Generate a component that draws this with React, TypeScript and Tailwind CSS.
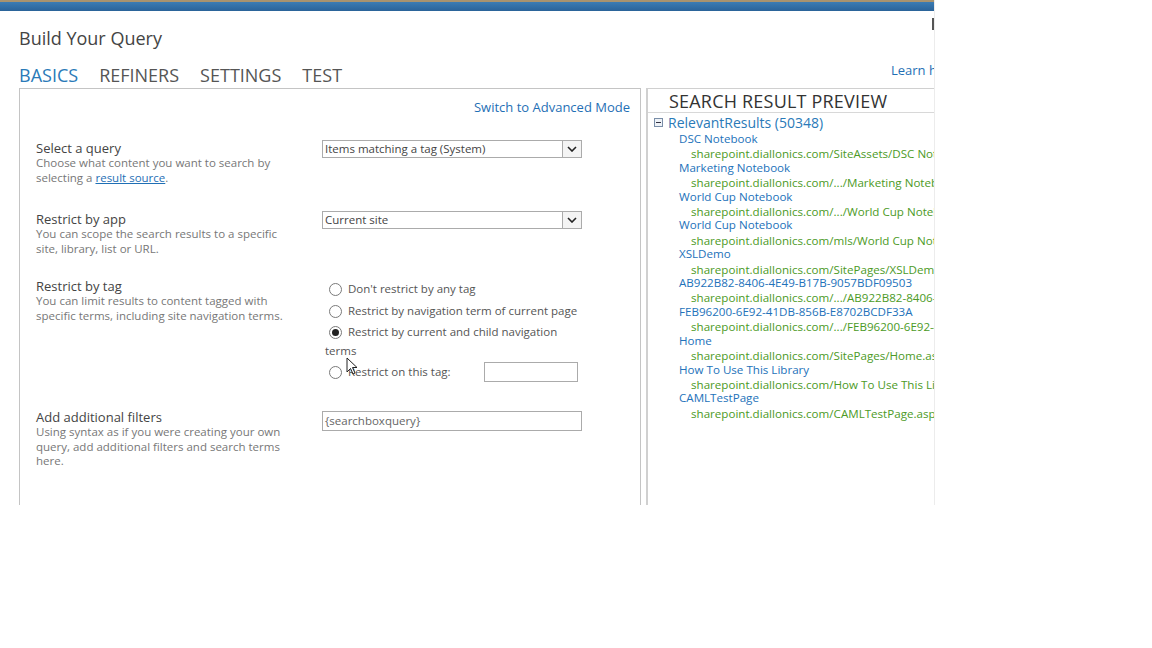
import React from "react";

const font = { fontFamily: '"Open Sans", "Noto Sans", sans-serif' };

function Radio({ checked }: { checked?: boolean }) {
  return (
    <span className="inline-flex w-[13px] h-[13px] rounded-full border border-[#7a7a7a] bg-white items-center justify-center shrink-0">
      {checked && <span className="w-[7px] h-[7px] rounded-full bg-[#222]" />}
    </span>
  );
}

function Select({ value }: { value: string }) {
  return (
    <div className="w-[260px] h-[18px] mt-[1px] border border-[#ababab] bg-white flex items-center">
      <span className="flex-1 pl-[2px] text-[11.5px] text-[#444] leading-none">{value}</span>
      <span className="w-[19px] h-[16px] border-l border-[#ababab] bg-[#f4f4f4] flex items-center justify-center">
        <svg width="10" height="6" viewBox="0 0 10 6">
          <path d="M1 1 L5 5 L9 1" stroke="#222" strokeWidth="1.6" fill="none" />
        </svg>
      </span>
    </div>
  );
}

const results: [string, string][] = [
  ["DSC Notebook", "sharepoint.diallonics.com/SiteAssets/DSC Notebook"],
  ["Marketing Notebook", "sharepoint.diallonics.com/.../Marketing Notebook"],
  ["World Cup Notebook", "sharepoint.diallonics.com/.../World Cup Notebook"],
  ["World Cup Notebook", "sharepoint.diallonics.com/mls/World Cup Notebook"],
  ["XSLDemo", "sharepoint.diallonics.com/SitePages/XSLDemo.aspx"],
  ["AB922B82-8406-4E49-B17B-9057BDF09503", "sharepoint.diallonics.com/.../AB922B82-8406-4E49"],
  ["FEB96200-6E92-41DB-856B-E8702BCDF33A", "sharepoint.diallonics.com/.../FEB96200-6E92-41DB"],
  ["Home", "sharepoint.diallonics.com/SitePages/Home.aspx"],
  ["How To Use This Library", "sharepoint.diallonics.com/How To Use This Library"],
  ["CAMLTestPage", "sharepoint.diallonics.com/CAMLTestPage.aspx"],
];

export default function App() {
  return (
    <div className="w-[1152px] h-[648px] bg-white" style={font}>
      <div className="w-[935px] h-[505px] overflow-hidden relative border-r border-[#ececec] bg-white">
        <div className="h-[2px] bg-[#a8936f]" />
        <div className="h-[9px] bg-gradient-to-b from-[#3b7cb4] to-[#2a6399]" />
        <div className="absolute right-0 top-[18px] w-[2px] h-[12px] bg-[#555]" />
        <div className="pl-[19px] pt-[16px] h-[40px] text-[18px] leading-[22px] text-[#444]">Build Your Query</div>
        <div className="flex items-start h-[37px] pl-[19px]">
          <div className="flex gap-[21px] pt-[13px] text-[18px] leading-[22px]">
            <span className="text-[#2a7ab8]">BASICS</span>
            <span className="text-[#555]">REFINERS</span>
            <span className="text-[#555]">SETTINGS</span>
            <span className="text-[#555]">TEST</span>
          </div>
          <div className="flex-1" />
          <div className="w-[43px] pt-[10px] text-[13px] leading-[18px] text-[#1f6fb5] whitespace-nowrap overflow-hidden">
            Learn how to build a query
          </div>
        </div>
        <div className="flex gap-[6px] ml-[19px]">
          {/* Left panel */}
          <div className="w-[622px] h-[420px] border border-[#c4c4c4] border-b-0 shrink-0 relative">
            <div className="flex justify-end pr-[10px] pt-[9px] h-[50px] text-[13px] leading-[18px] text-[#1f6fb5]">
              Switch to Advanced Mode
            </div>
            {/* row 1 */}
            <div className="flex h-[71px] pl-[16px]">
              <div className="w-[286px] pt-[1px]">
                <div className="text-[13px] leading-[16px] text-[#444]">Select a query</div>
                <div className="text-[11.5px] leading-[14.5px] text-[#777]">
                  Choose what content you want to search by<br />selecting a{" "}
                  <span className="text-[#1f6fb5] underline">result source</span>.
                </div>
              </div>
              <Select value="Items matching a tag (System)" />
            </div>
            {/* row 2 */}
            <div className="flex h-[67px] pl-[16px]">
              <div className="w-[286px] pt-[1px]">
                <div className="text-[13px] leading-[16px] text-[#444]">Restrict by app</div>
                <div className="text-[11.5px] leading-[14.5px] text-[#777]">
                  You can scope the search results to a specific<br />site, library, list or URL.
                </div>
              </div>
              <Select value="Current site" />
            </div>
            {/* row 3 */}
            <div className="flex h-[132px] pl-[16px]">
              <div className="w-[286px] pt-[1px]">
                <div className="text-[13px] leading-[16px] text-[#444]">Restrict by tag</div>
                <div className="text-[11.5px] leading-[14.5px] text-[#777]">
                  You can limit results to content tagged with<br />specific terms, including site navigation terms.
                </div>
              </div>
              <div className="pt-[4px] text-[11.5px] text-[#555] leading-[16px]">
                <div className="flex items-center gap-[6px] pl-[7px] h-[16px]"><Radio /><span>Don't restrict by any tag</span></div>
                <div className="flex items-center gap-[6px] pl-[7px] h-[16px] mt-[6px]"><Radio /><span>Restrict by navigation term of current page</span></div>
                <div className="flex items-center gap-[6px] pl-[7px] h-[16px] mt-[5px]"><Radio checked /><span>Restrict by current and child navigation</span></div>
                <div className="pl-[3px] h-[16px] mt-[3px]">terms</div>
                <div className="flex items-center gap-[6px] pl-[7px] h-[20px] mt-[3px]">
                  <Radio />
                  <span className="w-[130px]">Restrict on this tag:</span>
                  <span className="w-[94px] h-[20px] border border-[#ababab] bg-white" />
                </div>
              </div>
            </div>
            {/* row 4 */}
            <div className="flex pl-[16px]">
              <div className="w-[286px]">
                <div className="text-[13px] leading-[16px] text-[#444]">Add additional filters</div>
                <div className="text-[11.5px] leading-[14.5px] text-[#777]">
                  Using syntax as if you were creating your own<br />query, add additional filters and search terms<br />here.
                </div>
              </div>
              <div className="w-[260px] h-[20px] mt-[2px] border border-[#ababab] bg-white flex items-center pl-[2px] text-[11.5px] text-[#666]">
                {"{searchboxquery}"}
              </div>
            </div>
            {/* cursor */}
            <svg className="absolute left-[326px] top-[268px]" width="12" height="18" viewBox="0 0 12 18">
              <path d="M1 1 L1 15 L4.5 11.5 L7 17 L9 16 L6.5 10.5 L11 10.5 Z" fill="#fff" stroke="#222" strokeWidth="1" />
            </svg>
          </div>
          {/* Right panel */}
          <div className="flex-1 h-[420px] border-l-2 border-t border-[#d0d0d0] min-w-0 -ml-[1px] overflow-hidden">
            <div className="h-[24px] border-b border-[#d8d8d8] pl-[21px] text-[18px] leading-[24px] text-[#333] whitespace-nowrap tracking-[0.2px]">
              SEARCH RESULT PREVIEW
            </div>
            <div className="flex items-center h-[19px] pl-[6px] whitespace-nowrap">
              <span className="w-[9px] h-[9px] border border-[#7a8ea8] bg-[#eef2f7] flex items-center justify-center mr-[5px]">
                <span className="w-[5px] h-[1px] bg-[#334]" />
              </span>
              <span className="text-[14px] text-[#2a7ab8] leading-[19px]">RelevantResults (50348)</span>
            </div>
            <div className="whitespace-nowrap text-[11.6px] leading-[14.4px]">
              {results.map(([t, u], i) => (
                <div key={i}>
                  <div className="pl-[31px] text-[#2372ba]">{t}</div>
                  <div className="pl-[43px] text-[#4c9a26] pt-[1px] -mb-[1px]">{u}</div>
                </div>
              ))}
            </div>
          </div>
        </div>
      </div>
    </div>
  );
}
